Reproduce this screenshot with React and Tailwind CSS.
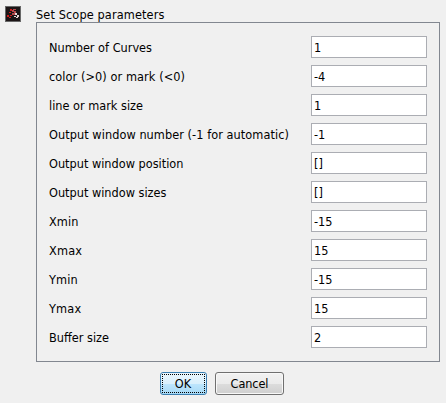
const fields = [
  { label: 'Number of Curves', value: '1', fit: 'tracking-normal' },
  { label: 'color (>0) or mark (<0)', value: '-4', fit: 'tracking-[0.08px]' },
  { label: 'line or mark size', value: '1', fit: 'tracking-normal' },
  { label: 'Output window number (-1 for automatic)', value: '-1', fit: 'tracking-[0.06px]' },
  { label: 'Output window position', value: '[]', fit: 'tracking-normal' },
  { label: 'Output window sizes', value: '[]', fit: 'tracking-normal' },
  { label: 'Xmin', value: '-15', fit: 'tracking-[0.1px]' },
  { label: 'Xmax', value: '15', fit: 'tracking-[0.2px]' },
  { label: 'Ymin', value: '-15', fit: 'tracking-[0.1px]' },
  { label: 'Ymax', value: '15', fit: 'tracking-[0.2px]' },
  { label: 'Buffer size', value: '2', fit: 'tracking-normal' },
];

function ScopeIcon() {
  return (
    <svg width="16" height="16" viewBox="0 0 16 16" shapeRendering="crispEdges">
      <rect width="16" height="16" rx="1" fill="#686868" />
      <rect x="1" y="1" width="14" height="14" fill="#1c1516" />
      <path d="M5 3h2v2H5zM4 6h2v1H4zM2 9h2v2H2zM4 11h2v1H4zM5 9h2v1H5z" fill="#d01c1c" />
      <path d="M8 3h3v1H8zM7 4h2v2H7zM7 7h3v2H7zM9 5h2v2H9z" fill="#b8484c" />
      <path d="M10 7h2v2h-2zM12 9h2v2h-2zM9 10h2v1H9zM11 11h2v1h-2z" fill="#e8d4d4" />
    </svg>
  );
}

export default function App() {
  return (
    <div className="flex h-[403px] w-[446px] flex-col bg-[#f0f0f0] font-['DejaVu_Sans_Condensed','DejaVu_Sans',sans-serif] text-[12.6px] leading-[14px] text-black [font-stretch:condensed]">
      <div className="flex">
        <div className="w-[36px] pt-[6px] pl-[5px]"><ScopeIcon /></div>
        <div>
          <div className="h-[22px] pt-[8px] tracking-[0.12px]">Set Scope parameters</div>
          <div className="flex h-[340px] w-[404px] flex-col gap-[7px] border border-[#828790] pt-[13px] pr-[12px] pl-[12px]">
            {fields.map((f) => (
              <label key={f.label} className="flex h-[22px] items-center justify-between">
                <span className={`whitespace-nowrap pt-[2px] ${f.fit}`}>{f.label}</span>
                <input defaultValue={f.value} className="h-[22px] w-[116px] border border-[#abadb3] bg-white px-[2px] pt-px outline-none" />
              </label>
            ))}
          </div>
        </div>
      </div>
      <div className="flex gap-[8px] pt-[10px] pl-[160px]">
        <button className="h-[23px] w-[47px] rounded-[3px] border border-[#3c7fb1] bg-[linear-gradient(to_bottom,#eaf6fd,#d9f0fc_50%,#bee6fd_50%,#a7d9f5)] p-px">
          <span className="flex h-full items-center justify-center border border-dotted border-black pr-px">OK</span>
        </button>
        <button className="flex h-[23px] w-[69px] items-center justify-center rounded-[3px] border border-[#707070] bg-[linear-gradient(to_bottom,#f2f2f2,#ebebeb_50%,#dddddd_50%,#cfcfcf)] tracking-[-0.1px] shadow-[inset_0_0_0_1px_#f8f8f8]">Cancel</button>
      </div>
    </div>
  );
}
